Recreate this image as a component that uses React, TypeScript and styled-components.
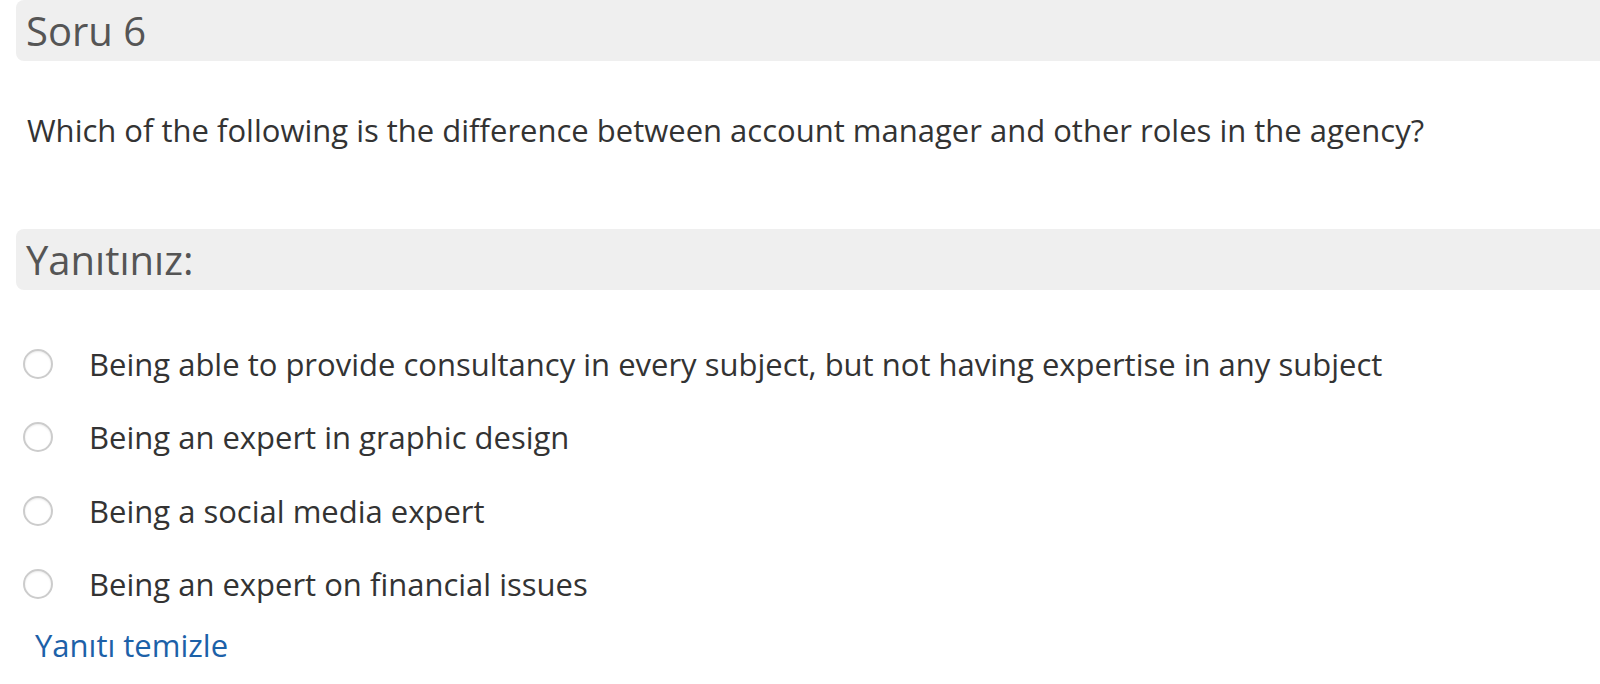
import React from "react";
import styled, { createGlobalStyle } from "styled-components";

const Global = createGlobalStyle`
  html, body {
    margin: 0;
    padding: 0;
    background: #ffffff;
  }
  body {
    font-family: "Open Sans", "Noto Sans", sans-serif;
    color: #333333;
    overflow: hidden;
  }
`;

const Page = styled.div`
  width: 1600px;
  height: 684px;
  overflow: hidden;
  padding-left: 16px;
  box-sizing: border-box;
`;

const Heading = styled.div<{ $top?: number }>`
  margin-top: ${(p) => p.$top ?? 0}px;
  margin-right: -40px;
  height: 61px;
  background: #efefef;
  border-radius: 8px;
  display: flex;
  align-items: center;
  padding-left: 10px;
  font-size: 40px;
  color: #555555;
`;

const Question = styled.p`
  margin: 0;
  padding: 48px 0 0 11px;
  height: 128px;
  box-sizing: border-box;
  font-size: 31px;
  line-height: 42px;
  color: #333333;
`;

const Options = styled.div`
  padding-top: 37px;
  display: flex;
  flex-direction: column;
`;

const Option = styled.label`
  display: flex;
  align-items: center;
  height: 73.5px;
  font-size: 31px;
  color: #333333;
`;

const Radio = styled.span`
  width: 26px;
  height: 26px;
  margin-left: 7px;
  border: 2px solid #cccccc;
  border-radius: 50%;
  background: #fff;
  box-shadow: inset 0 1px 2px rgba(0, 0, 0, 0.08);
  flex-shrink: 0;
`;

const OptionText = styled.span`
  margin-left: 36px;
`;

const ClearLink = styled.a`
  display: block;
  margin: 3px 0 0 19px;
  font-size: 31px;
  line-height: 42px;
  color: #1c61a8;
  text-decoration: none;
`;

const options = [
  "Being able to provide consultancy in every subject, but not having expertise in any subject",
  "Being an expert in graphic design",
  "Being a social media expert",
  "Being an expert on financial issues",
];

export default function App() {
  return (
    <>
      <Global />
      <Page>
        <Heading>Soru 6</Heading>
        <Question>Which of the following is the difference between account manager and other roles in the agency?</Question>
        <Heading $top={40}>Yanıtınız:</Heading>
        <Options>
          {options.map((o) => (
            <Option key={o}>
              <Radio />
              <OptionText>{o}</OptionText>
            </Option>
          ))}
        </Options>
        <ClearLink href="#">Yanıtı temizle</ClearLink>
      </Page>
    </>
  );
}
